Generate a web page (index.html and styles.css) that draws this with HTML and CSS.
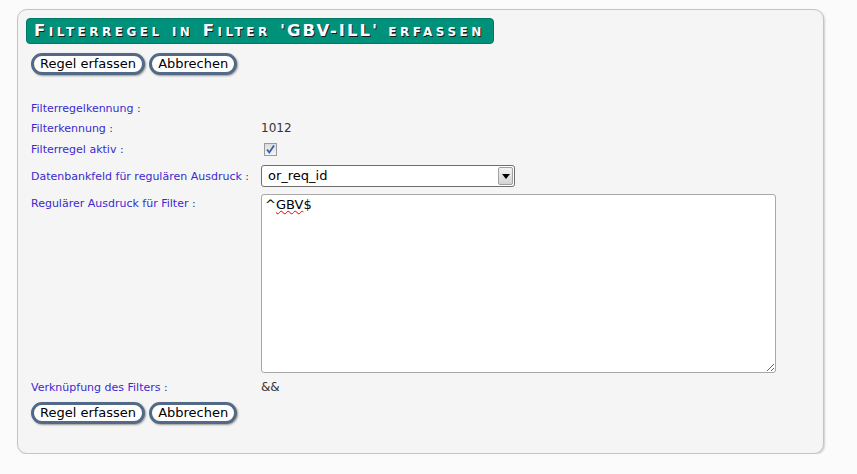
FILE: index.html
```html
<!DOCTYPE html>
<html lang="de">
<head>
    <meta charset="UTF-8">
    <title>Filterregel erfassen</title>
    <link rel="stylesheet" href="styles.css">
</head>
<body>
    <div class="panel">
        <h1 class="title">Filterregel in Filter <span class="up">'GBV-ILL'</span> erfassen</h1>

        <div class="buttons">
            <button type="button" class="btn">Regel erfassen</button>
            <button type="button" class="btn">Abbrechen</button>
        </div>

        <div class="form">
            <div class="row r1">
                <div class="label">Filterregelkennung <b>:</b></div>
                <div class="value"></div>
            </div>
            <div class="row r2">
                <div class="label">Filterkennung <b>:</b></div>
                <div class="value">1012</div>
            </div>
            <div class="row r3">
                <div class="label">Filterregel aktiv <b>:</b></div>
                <div class="value">
                    <span class="check">
                        <svg width="11" height="11" viewBox="0 0 11 11"><path d="M2 5.5 L4.3 8.5 L9 1.5" fill="none" stroke="#3a5fb0" stroke-width="1.8"/></svg>
                    </span>
                </div>
            </div>
            <div class="row r4">
                <div class="label">Datenbankfeld für regulären Ausdruck <b>:</b></div>
                <div class="value">
                    <div class="select">
                        <span>or_req_id</span>
                        <span class="arrow">
                            <svg width="8" height="5" viewBox="0 0 8 5"><path d="M0 0 H8 L4 5 Z" fill="#000"/></svg>
                        </span>
                    </div>
                </div>
            </div>
            <div class="row r5">
                <div class="label">Regulärer Ausdruck für Filter <b>:</b></div>
                <div class="value">
                    <div class="textarea">^<span class="spell">GBV</span>$</div>
                </div>
            </div>
            <div class="row r6">
                <div class="label">Verknüpfung des Filters <b>:</b></div>
                <div class="value">&amp;&amp;</div>
            </div>
        </div>

        <div class="buttons bottom">
            <button type="button" class="btn">Regel erfassen</button>
            <button type="button" class="btn">Abbrechen</button>
        </div>
    </div>
</body>
</html>
```

FILE: styles.css
```css
body {
    margin: 8px;
    background-color: #fbfbfb;
    font-family: "DejaVu Sans", Verdana, sans-serif;
}
.panel {
    margin: 1px 0 0 9px;
    width: 789px;
    height: 427px;
    padding: 8px 8px 8px 8px;
    background-color: #f5f5f5;
    border: 1px solid #c4c4c4;
    border-radius: 10px;
    box-shadow: 1px 1px 2px #d0d0d0;
}
.title {
    display: inline-block;
    margin: 0;
    height: 24px;
    line-height: 24px;
    padding: 0 8px 0 7px;
    background-color: #00917a;
    border: 1px solid #007764;
    border-radius: 4px;
    color: #fff;
    font-size: 16.5px;
    font-weight: bold;
    font-variant: small-caps;
    letter-spacing: 3.5px;
    text-shadow: 1px 1px 0 #1a1a1a;
}
.title .up {
    text-transform: uppercase;
    letter-spacing: 2px;
}
.buttons {
    display: flex;
    gap: 4px;
    margin: 9px 0 0 5px;
}
.btn {
    height: 22px;
    padding: 0 6px;
    background-color: #fff;
    border: 3px solid #526a86;
    border-radius: 11px;
    box-shadow: 1px 1px 2px #999;
    font-family: "DejaVu Sans", Verdana, sans-serif;
    font-size: 13px;
    line-height: 16px;
    color: #000;
}
.form {
    margin: 23px 0 0 5px;
}
.row {
    display: grid;
    grid-template-columns: 230px 1fr;
    align-items: center;
}
.label {
    font-size: 11px;
    color: #3a2ad0;
}
.label b {
    font-weight: normal;
    color: #334;
}
.value {
    font-size: 12px;
    color: #333;
}
.r1 { height: 20px; }
.r2 { height: 20px; }
.r3 { height: 22px; }
.r4 { height: 24px; margin-top: 4px; }
.r5 { align-items: start; margin-top: 6px; }
.r5 .label { padding-top: 3px; }
.r6 { height: 20px; margin-top: 4px; }
.check {
    display: inline-flex;
    align-items: center;
    justify-content: center;
    width: 11px;
    height: 11px;
    margin-left: 3px;
    border: 1px solid #9a9a9a;
    background: linear-gradient(#dcdcdc, #f4f4f4);
    vertical-align: middle;
}
.select {
    position: relative;
    width: 246px;
    height: 20px;
    padding-left: 6px;
    background-color: #fff;
    border: 1px solid #6e6e6e;
    border-radius: 3px;
    font-size: 13px;
    line-height: 20px;
    color: #000;
}
.select .arrow {
    position: absolute;
    top: 1px;
    right: 1px;
    width: 15px;
    height: 18px;
    display: flex;
    align-items: center;
    justify-content: center;
    background: linear-gradient(#f2f2f2, #d4d4d4);
    border: 1px solid #a0a0a0;
    border-radius: 2px;
    box-sizing: border-box;
}
.textarea {
    width: 507px;
    height: 173px;
    padding: 2px 3px;
    background-color: #fff;
    border: 1px solid #a8a8a8;
    border-radius: 3px;
    font-size: 13px;
    color: #000;
    overflow: auto;
    resize: both;
}
.spell {
    text-decoration: underline wavy #e00;
    text-decoration-thickness: 1px;
}
.bottom {
    margin-top: 5px;
}
```
